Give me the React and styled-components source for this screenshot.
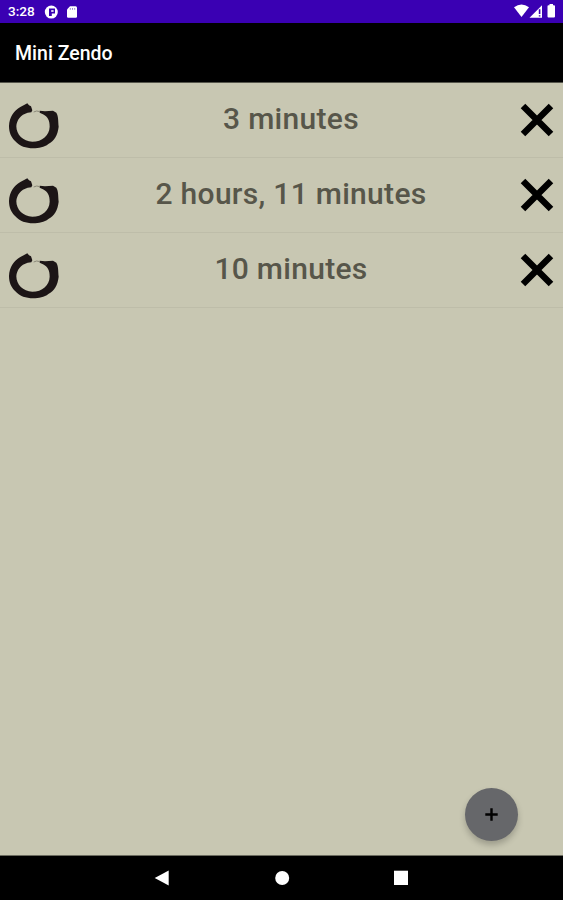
import React from "react"
import styled, { createGlobalStyle } from "styled-components"

const GlobalStyle = createGlobalStyle`
  body {
    margin: 0;
    background-color: #c8c7b2;
    font-family: Roboto, "Liberation Sans", sans-serif;
  }
  svg {
    display: block;
  }
`

const Screen = styled.div`
  display: flex;
  flex-direction: column;
  height: 900px;
  width: 563px;
  overflow: hidden;
  background-color: #c8c7b2;
`

const StatusBar = styled.div`
  box-sizing: border-box;
  display: flex;
  align-items: center;
  justify-content: space-between;
  height: 23px;
  padding: 0 7px 0 8px;
  background-color: #3a00b3;
  color: #ffffff;
`

const StatusGroup = styled.div`
  display: flex;
  align-items: center;
`

const Clock = styled.span`
  width: 36px;
  font-size: 13.6px;
  font-weight: 500;
  line-height: 23px;
`

const AppBar = styled.header`
  box-sizing: border-box;
  height: 60px;
  padding-left: 15px;
  background-color: #000000;
  border-bottom: 1px solid #55554b;
`

const Title = styled.h1`
  margin: 0;
  color: #ffffff;
  font-size: 19.5px;
  font-weight: 500;
  line-height: 62px;
`

const TimerList = styled.ul`
  flex: 1;
  margin: 0;
  padding: 0;
  list-style: none;
`

const TimerRow = styled.li`
  box-sizing: border-box;
  display: flex;
  align-items: center;
  height: 75px;
  padding: 0 9px 0 8px;
  border-bottom: 1px solid #bebda9;
`

const Duration = styled.span`
  flex: 1;
  padding: 0 0 2px 2px;
  color: #57564a;
  font-size: 30px;
  font-weight: 500;
  letter-spacing: 0.3px;
  line-height: 36px;
  text-align: center;
`

const DeleteButton = styled.button`
  margin: 0;
  padding: 0;
  border: 0;
  background: none;
`

const AddButton = styled.button`
  position: absolute;
  left: 465px;
  top: 788px;
  display: flex;
  align-items: center;
  justify-content: center;
  width: 53px;
  height: 53px;
  padding: 0;
  border: 0;
  border-radius: 50%;
  background-color: #66676a;
  box-shadow: 0 4px 6px rgba(0, 0, 0, 0.22);
`

const NavBar = styled.nav`
  box-sizing: border-box;
  display: flex;
  align-items: center;
  height: 45px;
  padding: 0 154px;
  justify-content: space-between;
  background-color: #000000;
  border-top: 1px solid #6b6b5f;
`

const EnsoIcon = styled.svg`
  margin-top: 12px;
`

const Enso = () => (
  <EnsoIcon width="52" height="46" viewBox="9 15 156 138">
    <path
      fill="#1c1516"
      d="M67 16L72 22L78 25L82 37L79 43L68 44C47 50 35 66 34 85C34 110 54 130 82 131C112 131 133 112 134 86C134 67 128 56 114 49L104 44L104 38L120 40L144 38L154 44C161 55 159 70 161 86C158 112 148 128 130 138C118 148 101 150 85 151C62 151 45 145 31 130C18 117 12 103 12 84C13 57 27 38 46 27Z"
    />
    <path fill="none" stroke="#8b897a" strokeWidth="3" d="M86 42L95 39L105 41" />
  </EnsoIcon>
)

const Cross = () => (
  <svg width="34" height="34" viewBox="0 0 34 34">
    <path d="M3 3L31 31M31 3L3 31" stroke="#000000" strokeWidth="6.4" />
  </svg>
)

const NotificationIcons = () => (
  <svg width="34" height="23" viewBox="0 0 34 23" fill="#ffffff">
    <circle cx="7.3" cy="12.1" r="6.5" />
    <path d="M5 8.6H11V13.4H7.8V16H5Z" fill="#3a00b3" />
    <path d="M7.2 10.2H9.6V11.8H7.2Z" />
    <path d="M26 6.2H31.6Q33 6.2 33 7.7V16.6Q33 17.8 31.8 17.8H24.2Q23 17.8 23 16.6V9.5Z" />
    <path d="M26.3 8V9.8M28.5 8V9.8M30.7 8V9.8" stroke="#3a00b3" strokeWidth="0.5" />
  </svg>
)

const SystemIcons = () => (
  <svg width="42" height="23" viewBox="0 0 42 23" fill="#ffffff">
    <path d="M0 7.3Q7.5 1.8 15 7.3L7.5 17Z" />
    <path d="M15.5 17.7L28 5.3V17.7Z" />
    <path d="M25.6 9.3V14M25.6 15.2V16.5" stroke="#3a00b3" strokeWidth="1.6" />
    <path d="M35.5 4H39V5.3H40Q41 5.3 41 6.3V16.5Q41 17.5 40 17.5H34.5Q33.5 17.5 33.5 16.5V6.3Q33.5 5.3 34.5 5.3H35.5Z" />
  </svg>
)

const timers = ["3 minutes", "2 hours, 11 minutes", "10 minutes"]

const App = () => {
  return (
    <Screen>
      <GlobalStyle />
      <StatusBar>
        <StatusGroup>
          <Clock>3:28</Clock>
          <NotificationIcons />
        </StatusGroup>
        <SystemIcons />
      </StatusBar>
      <AppBar>
        <Title>Mini Zendo</Title>
      </AppBar>
      <TimerList>
        {timers.map((timer) => (
          <TimerRow key={timer}>
            <Enso />
            <Duration>{timer}</Duration>
            <DeleteButton aria-label="Delete">
              <Cross />
            </DeleteButton>
          </TimerRow>
        ))}
      </TimerList>
      <AddButton aria-label="Add">
        <svg width="13" height="13" viewBox="0 0 13 13">
          <path d="M6.5 0.3V12.7M0.3 6.5H12.7" stroke="#000000" strokeWidth="2.4" />
        </svg>
      </AddButton>
      <NavBar>
        <svg width="16" height="16" viewBox="0 0 16 16" fill="#ffffff">
          <path d="M0.7 8L14.7 0.4V15.6Z" />
        </svg>
        <svg width="16" height="16" viewBox="0 0 16 16" fill="#ffffff">
          <circle cx="8.2" cy="8" r="7" />
        </svg>
        <svg width="16" height="16" viewBox="0 0 16 16" fill="#ffffff">
          <path d="M1 0.7H15V15H1Z" />
        </svg>
      </NavBar>
    </Screen>
  )
}

export default App
